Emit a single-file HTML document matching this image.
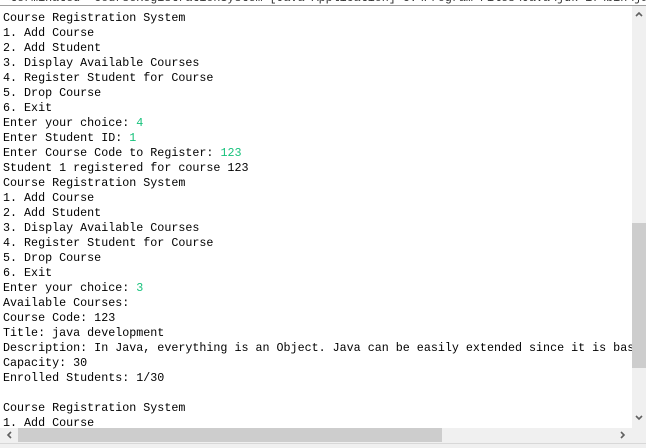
<!DOCTYPE html>
<html><head><style>
html,body{margin:0;padding:0;width:646px;height:448px;overflow:hidden;background:#fff;position:relative}
#top{position:absolute;left:0;top:0;width:646px;height:5px;overflow:hidden;background:#fff;border-bottom:1px solid #a0a0a0}
#top span{position:absolute;left:3px;top:-9px;font:11.7px "Liberation Mono",monospace;color:#333;white-space:pre}
#con{position:absolute;left:3px;top:11px;width:629px;height:417px;overflow:hidden;font:11.7px/15px "Liberation Mono",monospace;color:#000;white-space:pre}
.g{color:#17c27c}
#vs{position:absolute;left:632px;top:6px;width:14px;height:422px;background:#f0f0f0}
#vt{position:absolute;left:632px;top:223px;width:14px;height:145px;background:#cdcdcd}
#hs{position:absolute;left:0;top:428px;width:632px;height:15px;background:#f0f0f0}
#ht{position:absolute;left:18px;top:428px;width:424px;height:14px;background:#cdcdcd}
#bot{position:absolute;left:0;top:443px;width:646px;height:5px;background:#f0f0f0;border-top:1px solid #d8d8d8}
#corner{position:absolute;left:632px;top:428px;width:14px;height:15px;background:#f0f0f0}
</style></head><body>
<div id="top"><span>&lt;terminated&gt; CourseRegistrationSystem [Java Application] C:\Program Files\Java\jdk-17\bin\javaw.exe (13-Oct-2023, 10:1</span></div>
<div id="con">Course Registration System
1. Add Course
2. Add Student
3. Display Available Courses
4. Register Student for Course
5. Drop Course
6. Exit
Enter your choice: <span class="g">4</span>
Enter Student ID: <span class="g">1</span>
Enter Course Code to Register: <span class="g">123</span>
Student 1 registered for course 123
Course Registration System
1. Add Course
2. Add Student
3. Display Available Courses
4. Register Student for Course
5. Drop Course
6. Exit
Enter your choice: <span class="g">3</span>
Available Courses:
Course Code: 123
Title: java development
Description: In Java, everything is an Object. Java can be easily extended since it is based on the Object model.
Capacity: 30
Enrolled Students: 1/30

Course Registration System
1. Add Course</div>
<div id="vs"></div><div id="vt"></div>
<div id="hs"></div><div id="ht"></div><div id="corner"></div><div id="bot"></div>
<svg style="position:absolute;left:635px;top:11px" width="8" height="6"><path d="M1 5 L4 2 L7 5" stroke="#606060" stroke-width="1.6" fill="none"/></svg>
<svg style="position:absolute;left:635px;top:415px" width="8" height="6"><path d="M1 1 L4 4 L7 1" stroke="#606060" stroke-width="1.6" fill="none"/></svg>
<svg style="position:absolute;left:6px;top:431px" width="6" height="8"><path d="M5 1 L2 4 L5 7" stroke="#606060" stroke-width="1.6" fill="none"/></svg>
<svg style="position:absolute;left:620px;top:431px" width="6" height="8"><path d="M1 1 L4 4 L1 7" stroke="#606060" stroke-width="1.6" fill="none"/></svg>
</body></html>
